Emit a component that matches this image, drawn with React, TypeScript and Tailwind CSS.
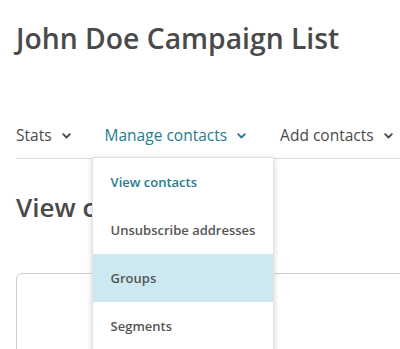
function Chevron({ color }: { color: string }) {
  return (
    <svg width="9" height="6" viewBox="0 0 9 6" className="ml-[10px] mt-[2px]">
      <polyline
        points="1.2,1.2 4.5,4.5 7.8,1.2"
        fill="none"
        stroke={color}
        strokeWidth="1.9"
        strokeLinecap="round"
        strokeLinejoin="round"
      />
    </svg>
  );
}

const menuItems = [
  { label: "View contacts", active: true },
  { label: "Unsubscribe addresses" },
  { label: "Groups", hover: true },
  { label: "Segments" },
];

export default function App() {
  return (
    <div className="h-[349px] w-[400px] overflow-hidden bg-white font-['Open_Sans',sans-serif]">
      <div className="w-[440px] pl-4">
        <h1 className="pt-5 text-[28.3px] font-semibold leading-9 text-[#4a4a4a]">John Doe Campaign List</h1>

        <nav className="relative mt-[69px] flex border-b border-[#dcdcdc] pb-[13px] text-[15.5px] leading-5">
          <div className="flex items-center text-[#4a4a4a]">
            Stats
            <Chevron color="#4a4a4a" />
          </div>
          <div className="relative ml-[34px] flex items-center text-[#267c8e]">
            Manage contacts
            <Chevron color="#267c8e" />
            <ul className="absolute left-[-13px] top-[32px] z-10 w-[182px] border border-[#e2e2e2] bg-white pb-4 text-[13px] font-semibold shadow-[0_1px_6px_rgba(0,0,0,0.18)]">
              {menuItems.map((item) => (
                <li
                  key={item.label}
                  className={`flex h-12 items-center pl-[18px] ${
                    item.active ? "text-[#267c8e]" : "text-[#555]"
                  } ${item.hover ? "bg-[#cce9f1]" : ""}`}
                >
                  {item.label}
                </li>
              ))}
            </ul>
          </div>
          <div className="ml-[34px] flex items-center text-[#4a4a4a]">
            Add contacts
            <Chevron color="#4a4a4a" />
          </div>
        </nav>

        <h2 className="mt-8 text-[26px] font-semibold leading-8 text-[#4a4a4a]">View contacts</h2>

        <div className="mt-[50px] h-[120px] rounded-md border border-[#cfcfcf]" />
      </div>
    </div>
  );
}
